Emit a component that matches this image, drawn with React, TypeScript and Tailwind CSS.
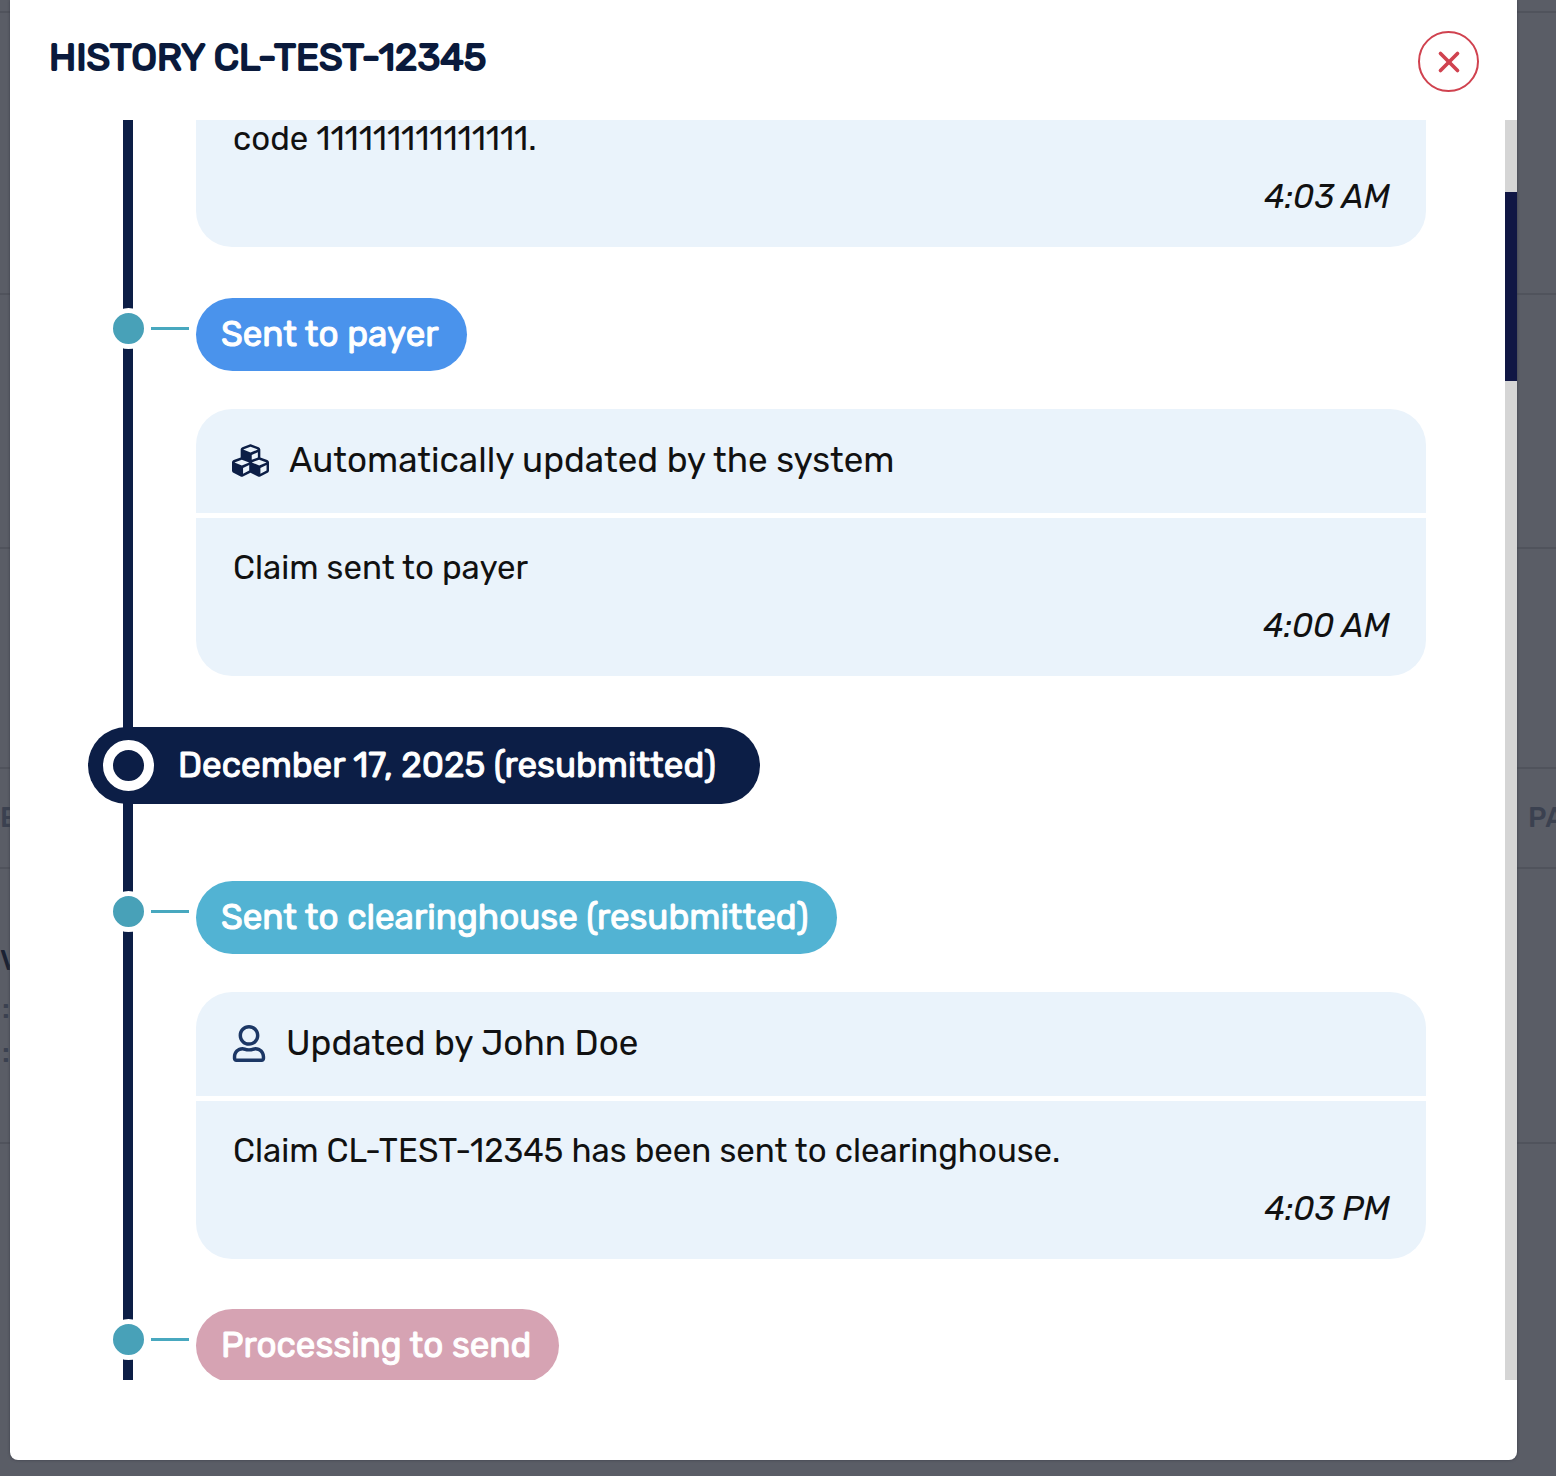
import type { ReactNode } from 'react'
import { FaCubes, FaRegUser } from 'react-icons/fa'
import { X } from 'lucide-react'

const StatusPill = ({ color, children }: { color: string; children: ReactNode }) => {
    return (
        <div className="flex items-start">
            <div className="flex w-[108px] shrink-0 items-center pl-5 pt-[10px]">
                <span className="h-[41px] w-[41px] rounded-full border-5 border-white bg-[#48a1b8]" />
                <span className="ml-0.5 h-[3px] w-[38px] bg-[#48a8bf]" />
            </div>
            <span className={`flex h-[73px] items-center rounded-full pl-[25px] pr-7 text-[35px] text-white [-webkit-text-stroke:1px] ${color}`}>
                {children}
            </span>
        </div>
    )
}

const CardText = ({ text, time }: { text: string; time: string }) => {
    return (
        <>
            <p className="text-[33px] leading-[38px]">{text}</p>
            <p className="mt-5 text-right text-[33px] italic leading-[38px]">{time}</p>
        </>
    )
}

const UpdateCard = ({ icon, author, text, time }: { icon: ReactNode; author: string; text: string; time: string }) => {
    return (
        <div className="ml-[108px] mt-[38px] rounded-[36px] bg-[#eaf3fb] text-[#111]">
            <div className="flex h-[104px] items-center gap-5 px-9 pb-0.5 text-[35px]">
                {icon}
                <p>{author}</p>
            </div>
            <div className="border-t-5 border-white pb-[31px] pl-[37px] pr-9 pt-[31px]">
                <CardText text={text} time={time} />
            </div>
        </div>
    )
}

const Timeline = () => {
    return (
        <ol className="relative min-w-0 flex-1 self-start pl-[78px] pr-[79px]">
            <span className="absolute bottom-0 left-[113px] top-0 w-[10px] bg-[#0c1e46]" />
            <li className="relative">
                <div className="ml-[108px] rounded-b-[36px] bg-[#eaf3fb] pb-[31px] pl-[37px] pr-9 text-[#111]">
                    <CardText text="code 111111111111111." time="4:03 AM" />
                </div>
            </li>
            <li className="relative mt-[51px]">
                <StatusPill color="bg-[#4a93ec]">Sent to payer</StatusPill>
                <UpdateCard
                    icon={<FaCubes className="h-[37px] w-[37px] text-[#0c1e46]" />}
                    author="Automatically updated by the system"
                    text="Claim sent to payer"
                    time="4:00 AM"
                />
            </li>
            <li className="relative mt-[51px] flex">
                <h3 className="flex h-[77px] items-center gap-6 rounded-full bg-[#0c1e46] pl-[15px] pr-11 text-[35px] text-white [-webkit-text-stroke:1px]">
                    <span className="h-[51px] w-[51px] rounded-full border-10 border-white" />
                    December 17, 2025 (resubmitted)
                </h3>
            </li>
            <li className="relative mt-[77px]">
                <StatusPill color="bg-[#52b3d3]">Sent to clearinghouse (resubmitted)</StatusPill>
                <UpdateCard
                    icon={<FaRegUser className="h-[37px] w-[34px] text-[#1c3765]" />}
                    author="Updated by John Doe"
                    text="Claim CL-TEST-12345 has been sent to clearinghouse."
                    time="4:03 PM"
                />
            </li>
            <li className="relative mt-[50px]">
                <StatusPill color="bg-[#d6a3b3]">Processing to send</StatusPill>
            </li>
        </ol>
    )
}

const ClaimsPage = () => {
    return (
        <div className="min-h-screen bg-[#5a5d66] text-[28px] font-medium leading-[44px] text-[#3b4150]">
            <div className="h-[13px] border-b-2 border-[#50535c]" />
            <div className="h-[282px] border-b-2 border-[#50535c]" />
            <div className="h-[254px] border-b-2 border-[#50535c]" />
            <div className="h-[220px] border-b-2 border-[#50535c]" />
            <div className="flex h-[100px] items-center justify-between overflow-hidden border-b-2 border-[#50535c]">
                <span>E</span>
                <span className="w-7">PA</span>
            </div>
            <div className="h-[275px] border-b-2 border-[#50535c] pt-[70px]">
                <p className="text-[#1b2233]">V</p>
                <p className="pl-0.5 pt-1">:</p>
                <p className="pl-0.5">:</p>
            </div>
        </div>
    )
}

const App = () => {
    return (
        <div className="relative h-screen overflow-hidden font-['Rubik','Roboto',sans-serif]">
            <ClaimsPage />
            <div className="absolute inset-0 pb-4 pl-[10px] pr-[39px]">
                <div
                    role="dialog"
                    aria-labelledby="history-title"
                    className="flex h-full flex-col rounded-b-lg bg-white pb-20 shadow-[0_0_3px_#3a3d47]"
                >
                    <div className="flex h-[120px] shrink-0 items-start justify-between pl-[39px] pr-[38px] pt-[31px]">
                        <h2 id="history-title" className="text-[38px] leading-[52px] text-[#0a1a3c] [-webkit-text-stroke:2px]">
                            HISTORY CL-TEST-12345
                        </h2>
                        <button
                            type="button"
                            aria-label="Close"
                            className="flex h-[61px] w-[61px] items-center justify-center rounded-full border-2 border-[#d0424f] text-[#d0424f]"
                        >
                            <X size={34} strokeWidth={2.6} />
                        </button>
                    </div>
                    <div className="flex min-h-0 flex-1 overflow-hidden">
                        <Timeline />
                        <div className="w-3 shrink-0 bg-[#d5d5d5] pt-[72px]">
                            <div className="h-[189px] bg-[#101644]" />
                        </div>
                    </div>
                </div>
            </div>
        </div>
    )
}

export default App
